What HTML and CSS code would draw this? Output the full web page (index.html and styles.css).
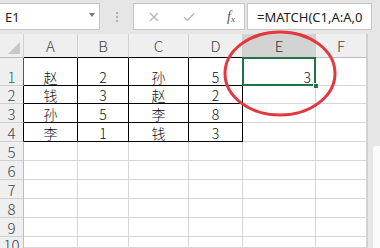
FILE: index.html
```html
<!DOCTYPE html>
<html lang="zh">

<head>
    <meta charset="UTF-8">
    <meta name="viewport" content="width=device-width, initial-scale=1.0">
    <title>MATCH</title>
    <link rel="stylesheet" href="styles.css">
</head>

<body>
    <div class="app">
        <div class="bar">
            <div class="namebox">
                <span class="namebox__text">E1</span>
                <span class="namebox__caret"></span>
            </div>
            <div class="dots"><i></i><i></i><i></i></div>
            <div class="fxbox">
                <svg class="fxbox__icon" width="10" height="10" viewBox="0 0 10 10">
                    <path d="M1 1 L9 9 M9 1 L1 9" stroke="#b5b5b5" stroke-width="1.3" fill="none" />
                </svg>
                <svg class="fxbox__icon" width="12" height="10" viewBox="0 0 12 10">
                    <path d="M1 5 L4.5 8.5 L11 1.5" stroke="#b5b5b5" stroke-width="1.3" fill="none" />
                </svg>
                <span class="fxbox__fx">f<sub>x</sub></span>
            </div>
            <div class="formula">=MATCH(C1,A:A,0</div>
        </div>

        <div class="sheet">
            <div class="grid">
                <!-- header -->
                <div class="cell head corner"><span class="corner__tri"></span></div>
                <div class="cell head top-b">A</div>
                <div class="cell head top-b">B</div>
                <div class="cell head top-b">C</div>
                <div class="cell head top-b">D</div>
                <div class="cell head head--sel">E</div>
                <div class="cell head">F</div>

                <!-- 1 -->
                <div class="cell row row--sel">1</div>
                <div class="cell b">赵</div>
                <div class="cell b">2</div>
                <div class="cell b">孙</div>
                <div class="cell b">5</div>
                <div class="cell sel">3</div>
                <div class="cell"></div>

                <!-- 2 -->
                <div class="cell row row--b">2</div>
                <div class="cell b">钱</div>
                <div class="cell b">3</div>
                <div class="cell b">赵</div>
                <div class="cell b">2</div>
                <div class="cell"></div>
                <div class="cell"></div>

                <!-- 3 -->
                <div class="cell row row--b">3</div>
                <div class="cell b">孙</div>
                <div class="cell b">5</div>
                <div class="cell b">李</div>
                <div class="cell b">8</div>
                <div class="cell"></div>
                <div class="cell"></div>

                <!-- 4 -->
                <div class="cell row row--b">4</div>
                <div class="cell b">李</div>
                <div class="cell b">1</div>
                <div class="cell b">钱</div>
                <div class="cell b">3</div>
                <div class="cell"></div>
                <div class="cell"></div>

                <div class="cell row">5</div>
                <div class="cell"></div><div class="cell"></div><div class="cell"></div>
                <div class="cell"></div><div class="cell"></div><div class="cell"></div>

                <div class="cell row">6</div>
                <div class="cell"></div><div class="cell"></div><div class="cell"></div>
                <div class="cell"></div><div class="cell"></div><div class="cell"></div>

                <div class="cell row">7</div>
                <div class="cell"></div><div class="cell"></div><div class="cell"></div>
                <div class="cell"></div><div class="cell"></div><div class="cell"></div>

                <div class="cell row">8</div>
                <div class="cell"></div><div class="cell"></div><div class="cell"></div>
                <div class="cell"></div><div class="cell"></div><div class="cell"></div>

                <div class="cell row">9</div>
                <div class="cell"></div><div class="cell"></div><div class="cell"></div>
                <div class="cell"></div><div class="cell"></div><div class="cell"></div>

                <div class="cell row row--cut">10</div>
                <div class="cell"></div><div class="cell"></div><div class="cell"></div>
                <div class="cell"></div><div class="cell"></div><div class="cell"></div>
            </div>
            <div class="vscroll"><div class="vscroll__thumb"></div></div>
        </div>

        <svg class="ring" width="116" height="88" viewBox="0 0 116 88">
            <ellipse cx="57" cy="43.5" rx="55" ry="41.5" fill="none" stroke="#e3393e" stroke-width="3" />
        </svg>
    </div>
</body>

</html>
```

FILE: styles.css
```css
*,
*::after,
*::before {
    padding: 0;
    margin: 0;
    box-sizing: border-box;
}

html,
body {
    width: 380px;
    height: 248px;
    overflow: hidden;
}

body {
    background: #e6e6e6;
    font-family: "Noto Sans", "Noto Sans CJK SC", sans-serif;
}

.app {
    position: relative;
    width: 380px;
    height: 248px;
    overflow: hidden;
}

/* formula bar */

.bar {
    display: flex;
    align-items: stretch;
    height: 30px;
    padding-top: 3px;
    margin-bottom: 4px;
}

.namebox {
    width: 100px;
    background: #fff;
    border: 1px solid #c6c6c6;
    border-left: 0;
    display: flex;
    align-items: center;
    justify-content: space-between;
    padding: 0 4px 0 5px;
}

.namebox__text {
    font-size: 13px;
    color: #222;
}

.namebox__caret {
    width: 0;
    height: 0;
    border-left: 3.5px solid transparent;
    border-right: 3.5px solid transparent;
    border-top: 4px solid #777;
    margin-top: -3px;
}

.dots {
    width: 33px;
    display: flex;
    flex-direction: column;
    align-items: center;
    justify-content: center;
    gap: 2px;
}

.dots i {
    display: block;
    width: 2px;
    height: 2px;
    background: #b0b0b0;
}

.fxbox {
    width: 112px;
    background: #fff;
    border: 1px solid #c6c6c6;
    display: flex;
    align-items: center;
    padding-left: 15px;
    gap: 24px;
}

.fxbox__fx {
    font-family: "Liberation Serif", serif;
    font-style: italic;
    font-size: 14px;
    color: #555;
    margin-left: 8px;
}

.fxbox__fx sub {
    font-size: 9px;
    vertical-align: -1px;
}

.formula {
    width: 125px;
    margin-left: 2px;
    background: #fff;
    border: 1px solid #c6c6c6;
    font-size: 13px;
    color: #222;
    padding: 4px 0 0 9px;
    white-space: nowrap;
    overflow: hidden;
}

/* sheet */

.sheet {
    display: flex;
    height: 214px;
    overflow: hidden;
}

.grid {
    width: 367px;
    display: grid;
    grid-template-columns: 24px 54px 51px 60px 54px 73px 51px;
    grid-template-rows: 24px 28px 18px repeat(7, 19px) 11px;
    background: #fff;
}

.cell {
    border-right: 1px solid #d6d6d6;
    border-bottom: 1px solid #d6d6d6;
    display: flex;
    align-items: flex-end;
    justify-content: center;
    font-family: "Noto Sans CJK SC", sans-serif;
    font-weight: 300;
    font-size: 14px;
    line-height: 16px;
    color: #111;
    position: relative;
}

.head {
    background: #efefef;
    color: #444;
    align-items: center;
    font-size: 15px;
    border-right-color: #cfcfcf;
    border-bottom-color: #bdbdbd;
}

.head--sel {
    background: #d3d3d3;
    color: #333;
}

.top-b {
    border-bottom-color: #000;
}

.corner__tri {
    position: absolute;
    right: 3px;
    bottom: 3px;
    width: 0;
    height: 0;
    border-left: 12px solid transparent;
    border-bottom: 12px solid #c8c8c8;
}

.row {
    background: #efefef;
    color: #444;
    font-size: 15px;
    border-right-color: #bdbdbd;
    border-bottom-color: #cfcfcf;
}

.row--sel {
    color: #217346;
    border-right: 1px solid #217346;
}

.row--b {
    border-right-color: #000;
}

.row--cut {
    align-items: flex-start;
    overflow: hidden;
    border-bottom: 0;
}

.b {
    border-right-color: #000;
    border-bottom-color: #000;
}

.sel {
    justify-content: flex-end;
    padding-right: 4px;
}

.sel::after {
    content: "";
    position: absolute;
    top: -1px;
    left: -1px;
    right: -1px;
    bottom: -1px;
    border: 2px solid #217346;
}

.sel::before {
    content: "";
    position: absolute;
    right: -4px;
    bottom: -4px;
    width: 6px;
    height: 6px;
    background: #217346;
    border: 1px solid #fff;
    z-index: 1;
}

.vscroll {
    width: 13px;
    background: #e6e6e6;
    border-left: 1px solid #d0d0d0;
    padding: 112px 0 0 5px;
}

.vscroll__thumb {
    height: 140px;
    background: #fafafa;
    border-radius: 3px 0 0 0;
}

.ring {
    position: absolute;
    left: 223px;
    top: 30px;
}
```
